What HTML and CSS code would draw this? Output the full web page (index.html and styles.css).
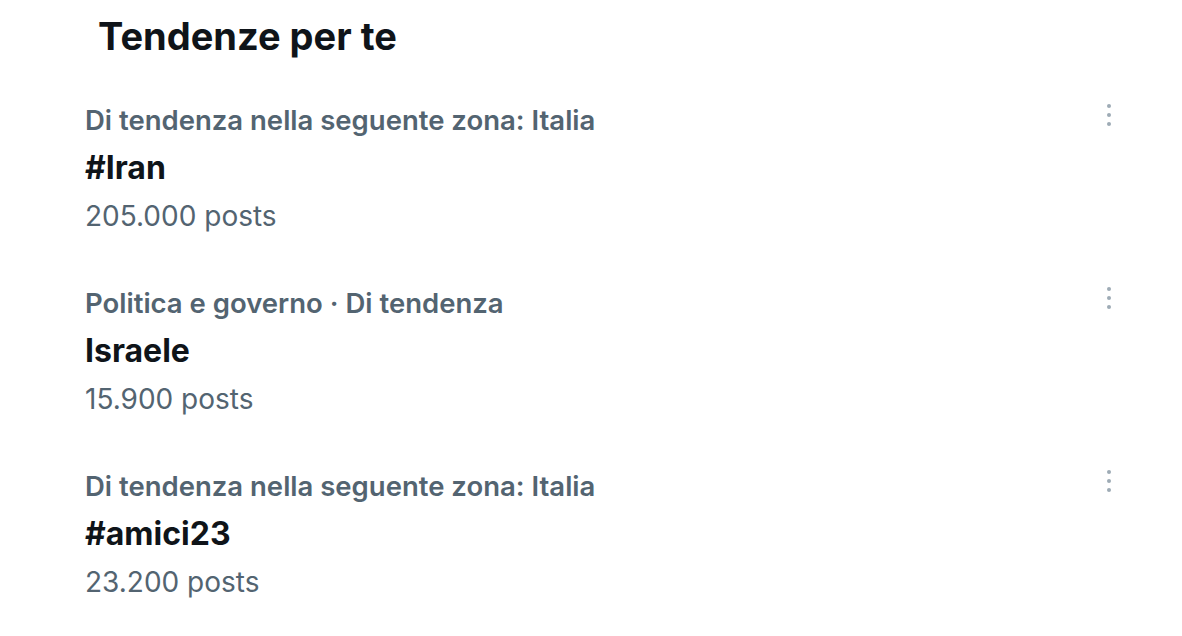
FILE: index.html
```html
<!DOCTYPE html>
<html lang="it">
<head>
  <meta charset="UTF-8" />
  <meta name="viewport" content="width=device-width, initial-scale=1.0"/>
  <title>Tendenze per te</title>
  <link rel="stylesheet" href="styles.css">
</head>
<body>

  <h1 class="title">Tendenze per te</h1>

  <!-- LISTA TENDENZE -->
  <div class="trend">
    <div class="trend-info">
      <p class="meta">Di tendenza nella seguente zona: Italia</p>
      <p class="name">#Iran</p>
      <p class="count">205.000 posts</p>
    </div>
    <button class="more" aria-label="Altro"><span></span><span></span><span></span></button>
  </div>

  <div class="trend">
    <div class="trend-info">
      <p class="meta">Politica e governo · Di tendenza</p>
      <p class="name">Israele</p>
      <p class="count">15.900 posts</p>
    </div>
    <button class="more" aria-label="Altro"><span></span><span></span><span></span></button>
  </div>

  <div class="trend">
    <div class="trend-info">
      <p class="meta">Di tendenza nella seguente zona: Italia</p>
      <p class="name">#amici23</p>
      <p class="count">23.200 posts</p>
    </div>
    <button class="more" aria-label="Altro"><span></span><span></span><span></span></button>
  </div>

</body>
</html>
```

FILE: styles.css
```css
body {
  font-family: Inter, 'Noto Sans', sans-serif;
  margin: 0;
  padding: 0;
  background-color: #ffffff;
  color: #0f1419;
}

.title {
  margin: 0;
  padding: 14px 0 0 98px;
  font-size: 38px;
  font-weight: 700;
  line-height: 44px;
}

.trend {
  display: flex;
  justify-content: space-between;
  align-items: flex-start;
  padding: 0 71px 0 85px;
  height: 183px;
}

.trend:first-of-type {
  margin-top: 38px;
}

.trend-info p {
  margin: 0;
  line-height: 48px;
}

.meta {
  font-size: 27.5px;
  font-weight: 600;
  color: #536471;
}

.name {
  font-size: 32px;
  font-weight: 700;
  color: #0f1419;
}

.count {
  font-size: 28px;
  font-weight: 400;
  color: #536471;
}

.more {
  display: flex;
  flex-direction: column;
  gap: 5px;
  margin-top: 8px;
  padding: 0;
  border: none;
  background: none;
}

.more span {
  width: 4px;
  height: 4px;
  border-radius: 50%;
  background-color: #9eabb5;
}
```
